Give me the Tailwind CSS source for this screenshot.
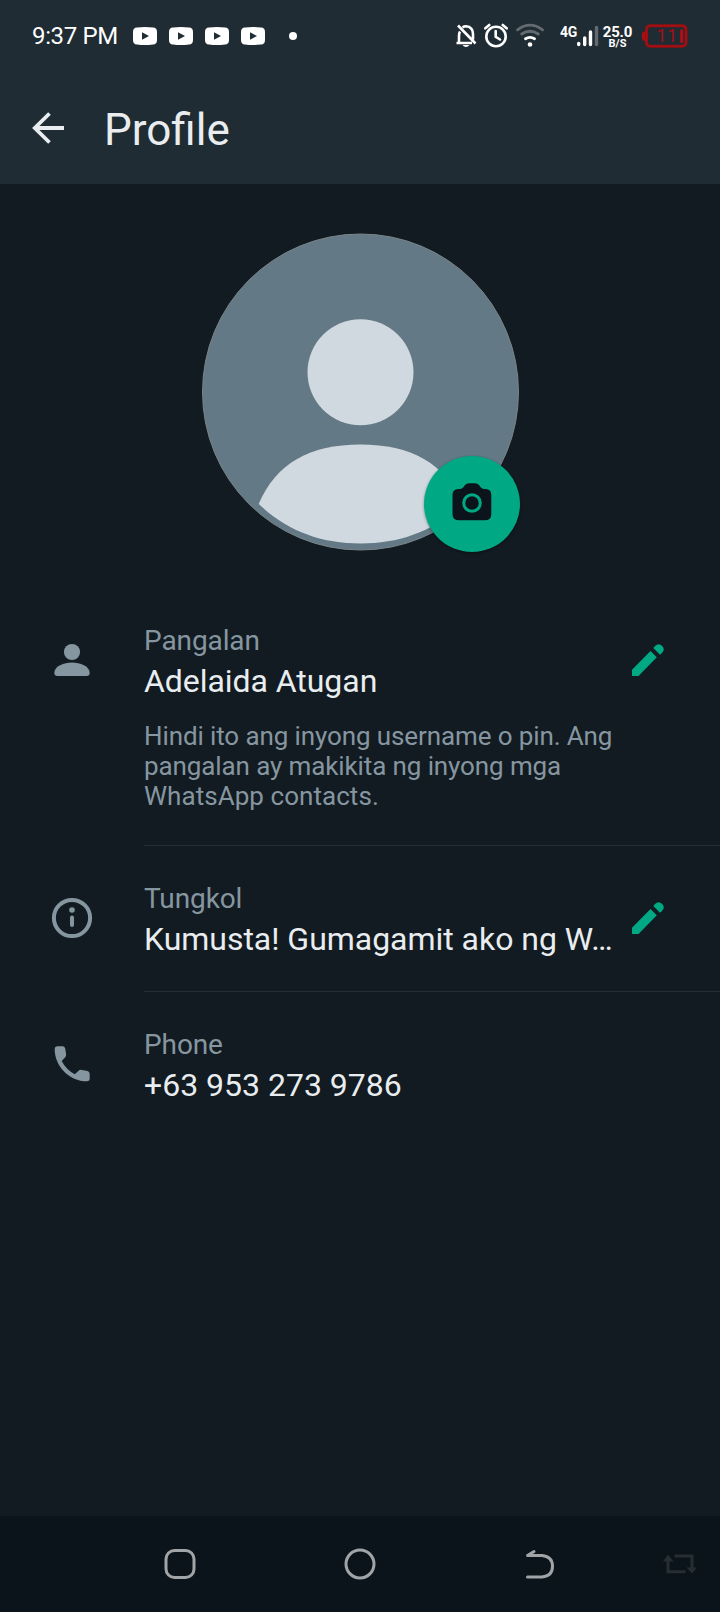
<!DOCTYPE html>
<html lang="tl">
<head>
<meta charset="utf-8">
<title>Profile</title>
<script src="https://cdn.jsdelivr.net/npm/@tailwindcss/browser@4"></script>
</head>
<body class="bg-[#121b21]">
<div class="flex h-[1612px] w-[720px] flex-col overflow-hidden bg-[#121b21] font-[Roboto,sans-serif] text-[#e9edef]">
  <header class="h-[184px] shrink-0 bg-[#202c33]">
    <div class="flex h-[72px] items-center text-white">
      <span class="ml-8 w-[101px] whitespace-nowrap text-[24px] leading-[73px] tracking-[-0.35px]">9:37 PM</span>
      <div class="flex gap-3">
        <svg class="h-[18px] w-6" viewBox="0 0 24 18"><path fill="#fff" fill-rule="evenodd" d="M4 .5Q12-.5 20 .5Q24 .6 24 5V13Q24 17.4 20 17.5Q12 18.500 4 17.500Q0 17.400 0 13V5Q0 .6 4 .5ZM9 5.300V12.700L16 9Z"/></svg>
        <svg class="h-[18px] w-6" viewBox="0 0 24 18"><path fill="#fff" fill-rule="evenodd" d="M4 .5Q12-.5 20 .5Q24 .6 24 5V13Q24 17.4 20 17.5Q12 18.500 4 17.500Q0 17.400 0 13V5Q0 .6 4 .5ZM9 5.300V12.700L16 9Z"/></svg>
        <svg class="h-[18px] w-6" viewBox="0 0 24 18"><path fill="#fff" fill-rule="evenodd" d="M4 .5Q12-.5 20 .5Q24 .6 24 5V13Q24 17.4 20 17.5Q12 18.500 4 17.500Q0 17.400 0 13V5Q0 .6 4 .5ZM9 5.300V12.700L16 9Z"/></svg>
        <svg class="h-[18px] w-6" viewBox="0 0 24 18"><path fill="#fff" fill-rule="evenodd" d="M4 .5Q12-.5 20 .5Q24 .6 24 5V13Q24 17.4 20 17.5Q12 18.500 4 17.500Q0 17.400 0 13V5Q0 .6 4 .5ZM9 5.300V12.700L16 9Z"/></svg>
      </div>
      <span class="ml-6 size-2 rounded-full bg-white"></span>
      <div class="ml-auto mr-8 flex h-[72px]">
        <svg class="h-[72px] w-7" viewBox="452 0 28 72" fill="none" stroke="#fff" stroke-width="2.600">
          <path d="M460 31.500Q459 33 459 36V42M456.500 43H472M462.500 27.500Q464 26.300 466 26.300Q473 27 473 34V39.500M458 25.500L475.500 43.500"/><path d="M462.500 45H469.500Q468 47 466 47T462.500 45Z" fill="#fff" stroke="none"/>
        </svg>
        <svg class="h-[72px] w-8" viewBox="480 0 32 72" fill="none" stroke="#fff" stroke-width="2.600" stroke-linecap="round">
          <circle cx="496" cy="36.500" r="9.700"/><path d="M495.700 31V36.800L500 39.500M485.300 28.300L489.300 25M506.700 28.300L502.700 25"/>
        </svg>
        <svg class="h-[72px] w-9" viewBox="512 0 36 72" fill="none" stroke-width="2.800" stroke-linecap="round">
          <path stroke="#636b70" d="M517.500 29.800Q530 20.500 542.500 29.800M521.700 34Q530 28.500 538.300 34"/><path stroke="#fff" d="M525.500 38.800Q530 36 534.500 38.800"/><circle cx="530" cy="44.500" r="2.300" fill="#fff"/>
        </svg>
        <span class="ml-3 mt-[24px] w-[17px] whitespace-nowrap text-[14px] font-bold leading-4 tracking-[-0.300px]">4G</span>
        <svg class="h-[72px] w-[27px]" viewBox="577 0 27 72" stroke="#fff" stroke-width="3.400" stroke-linecap="round">
          <path d="M578.700 43.500V44.500M584.700 38V44.500M590.500 32V44.500"/><path stroke="#636b70" d="M596.500 27.500V44.500"/>
        </svg>
        <div class="flex w-[31px] flex-col items-center pr-1 pt-[24px] font-bold"><span class="text-[15px] leading-4 tracking-[-0.200px]">25.0</span><span class="text-[11px] leading-[8px]">B/S</span></div>
        <svg class="h-[72px] w-[53px]" viewBox="635 0 53 72">
          <path d="M645 31.500Q642 31.500 642 34V38Q642 41 645 41Z" fill="#b00d10"/>
          <rect x="646.500" y="25.800" width="39.500" height="20.400" rx="3.500" fill="none" stroke="#8f1115" stroke-width="3"/>
          <rect x="646.500" y="25.800" width="39.500" height="20.400" rx="3.500" fill="none" stroke="#b80c10" stroke-width="1"/>
          <path d="M681.700 29.500V42.800" stroke="#b80c10" stroke-width="3"/>
          <text x="656.500" y="42" font-family="Roboto" font-size="17.500" font-weight="400" fill="#a80e12" letter-spacing="0.800">11</text>
        </svg>
      </div>
    </div>
    <div class="flex h-28 items-center">
      <svg class="ml-8 h-8 w-8" viewBox="0 0 32 32" fill="none" stroke="#e9edef" stroke-width="3.800"><path d="M2 16H32M17.500 1.500L2.800 16L17.500 30.500"/></svg>
      <h1 class="ml-10 pt-[3px] text-[44px] font-normal leading-none">Profile</h1>
    </div>
  </header>

  <main class="flex-1">
    <section class="flex h-[404px] justify-center pt-[49px]">
      <div class="relative h-[318px] w-[317px]">
        <svg class="h-[318px] w-[317px]" viewBox="0 0 317 318">
          <circle cx="158.500" cy="159" r="158" fill="#637985" stroke="#7b8589" stroke-width="1"/>
          <circle cx="158.500" cy="139.300" r="53" fill="#d1d9e0"/>
          <path fill="#d1d9e0" d="M56.700 271C74 230 108 211.500 158.500 211.500S243 230 260.300 271C232 298 198 310.500 158.500 310.500S85 298 56.700 271Z"/>
        </svg>
        <button class="absolute left-[222px] top-[223px] flex size-24 items-center justify-center rounded-full bg-[#00a884] shadow-[0_1px_3px_#0006]" aria-label="Camera">
          <svg class="size-24" viewBox="0 0 96 96"><path fill="#0b141a" d="M34.500 33H36Q38 33 39.500 31L41 29Q42.500 27.300 45 27.300H51Q53.500 27.300 55 29L56.500 31Q58 33 60 33H61.500Q67.300 33 67.300 39V58Q67.300 64.300 61 64.300H35Q28.500 64.300 28.500 58V39Q28.500 33 34.500 33Z"/><circle cx="48" cy="47" r="8.300" fill="none" stroke="#00a884" stroke-width="3"/></svg>
        </button>
      </div>
    </section>

    <section class="flex h-[258px]">
      <svg class="h-36 w-36 shrink-0" viewBox="0 0 144 144" fill="#8696a0"><circle cx="72" cy="64" r="8.100"/><path d="M54.300 85C54.300 78 64 74.500 72 74.500S89.700 78 89.700 85Q89.700 88 86.500 88H57.500Q54.300 88 54.300 85Z"/></svg>
      <div class="flex flex-1 border-b border-[#222d34] pt-9">
        <div class="w-[480px]">
          <p class="text-[28px] leading-[34px] tracking-[-0.100px] text-[#8696a0]">Pangalan</p>
          <p class="mt-1 text-[32px] leading-[38px] tracking-[-0.050px]">Adelaida Atugan</p>
          <p class="mt-[21px] whitespace-nowrap text-[26px] leading-[30px] text-[#8696a0]"><span class="tracking-[-0.110px]">Hindi ito ang inyong username o pin. Ang</span><br><span class="tracking-[-0.110px]">pangalan ay makikita ng inyong mga</span><br><span class="tracking-[0.050px]">WhatsApp contacts.</span></p>
        </div>
        <svg class="mt-5 h-8 w-10" viewBox="624 56 40 32" fill="#00a884"><path d="M632 88V81.700L650.500 63L656.800 69.300L638.500 88ZM653.300 60L655 58.100Q658.500 54.500 662.200 57.900Q665.500 61.500 662 65L660 66.700Z"/></svg>
      </div>
    </section>

    <section class="flex h-[146px]">
      <svg class="h-36 w-36 shrink-0" viewBox="0 0 144 144" fill="none" stroke="#8696a0" stroke-width="4"><circle cx="72" cy="72" r="18.100"/><path d="M72 71.500V79" stroke-linecap="round"/><circle cx="72" cy="64" r="2.800" fill="#8696a0" stroke="none"/></svg>
      <div class="flex flex-1 border-b border-[#222d34] pt-9">
        <div class="w-[480px]">
          <p class="text-[28px] leading-[34px] tracking-[-0.100px] text-[#8696a0]">Tungkol</p>
          <p class="mt-1 whitespace-nowrap text-[32px] leading-[38px] tracking-[-0.030px]">Kumusta! Gumagamit ako ng W…</p>
        </div>
        <svg class="mt-5 h-8 w-10" viewBox="624 56 40 32" fill="#00a884"><path d="M632 88V81.700L650.500 63L656.800 69.300L638.500 88ZM653.300 60L655 58.100Q658.500 54.500 662.200 57.900Q665.500 61.500 662 65L660 66.700Z"/></svg>
      </div>
    </section>

    <section class="flex h-[146px]">
      <svg class="h-36 w-36 shrink-0" viewBox="0 0 144 144" fill="#8696a0"><path d="M57.500 54.300H62.500Q64.700 54.300 65.200 56.500L66.100 62Q66.400 64 65 65.500L61.700 69Q66 77.500 74.800 82.300L78.300 79Q79.800 77.600 82 77.900L87.500 79Q89.700 79.500 89.700 82V86.500Q89.700 89.300 87 89.300C69 89.300 54.700 74 54.700 57.200Q54.700 54.300 57.500 54.300Z"/></svg>
      <div class="flex-1 pt-9">
        <p class="text-[28px] leading-[34px] tracking-[-0.100px] text-[#8696a0]">Phone</p>
        <p class="mt-1 text-[32px] leading-[38px]">+63 953 273 9786</p>
      </div>
    </section>
  </main>

  <nav class="flex h-24 shrink-0 items-center bg-[#0b141a]">
    <svg class="ml-[162px] size-9" viewBox="162 1546 36 36" fill="none" stroke="#a2a5a8" stroke-width="3"><rect x="166" y="1550.500" width="28" height="27" rx="8.500"/></svg>
    <svg class="ml-[144px] size-9" viewBox="342 1546 36 36" fill="none" stroke="#a2a5a8" stroke-width="3"><circle cx="360" cy="1564" r="14"/></svg>
    <svg class="ml-[144px] size-9" viewBox="522 1546 36 36" fill="none" stroke="#a2a5a8" stroke-width="3" stroke-linecap="round" stroke-linejoin="round"><path d="M534 1551.500L527.500 1555.500H542Q552.500 1556.500 552.500 1566.300T542 1577H527.500"/></svg>
    <svg class="ml-[104px] size-9" viewBox="662 1546 36 36" fill="none" stroke="#272e33" stroke-width="3"><path d="M668 1559V1571.800H685.500M674.500 1556H692V1569"/><path d="M663 1561.500L668 1554.500L673.500 1561.500ZM686.500 1567.500H697L692 1573.500Z" fill="#272e33" stroke="none"/></svg>
  </nav>
</div>
</body>
</html>
